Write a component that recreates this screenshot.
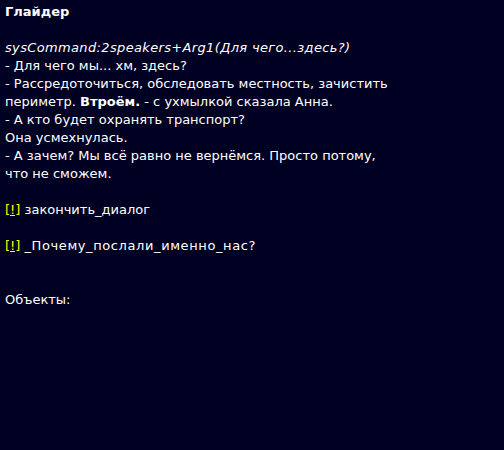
// Текстовый квест: экран диалога
function Action({ children }) {
  return (
    <p>
      <span className="text-[#ffff00] underline">[!]</span> {children}
    </p>
  )
}

export default function App() {
  return (
    <div
      className="min-h-[450px] w-full bg-[#000022] text-white text-[13px] leading-[18px] px-[5px] pt-[3px]"
      style={{ fontFamily: '"DejaVu Sans", sans-serif' }}
    >
      <p className="font-bold">Глайдер</p>
      <br />
      <p>
        <i className="tracking-[0.35px]">sysCommand:2speakers+Arg1(Для чего...здесь?)</i>
        <br />
        - Для чего мы... хм, здесь?
        <br />
        - Рассредоточиться, обследовать местность, зачистить
        <br />
        периметр. <b>Втроём.</b> - с ухмылкой сказала Анна.
        <br />
        - А кто будет охранять транспорт?
        <br />
        Она усмехнулась.
        <br />
        - А зачем? Мы всё равно не вернёмся. Просто потому,
        <br />
        что не сможем.
      </p>
      <br />
      <Action>закончить_диалог</Action>
      <br />
      <Action>
        <span className="tracking-[0.6px]">_Почему_послали_именно_нас?</span>
      </Action>
      <br />
      <br />
      <p>Объекты:</p>
    </div>
  )
}
